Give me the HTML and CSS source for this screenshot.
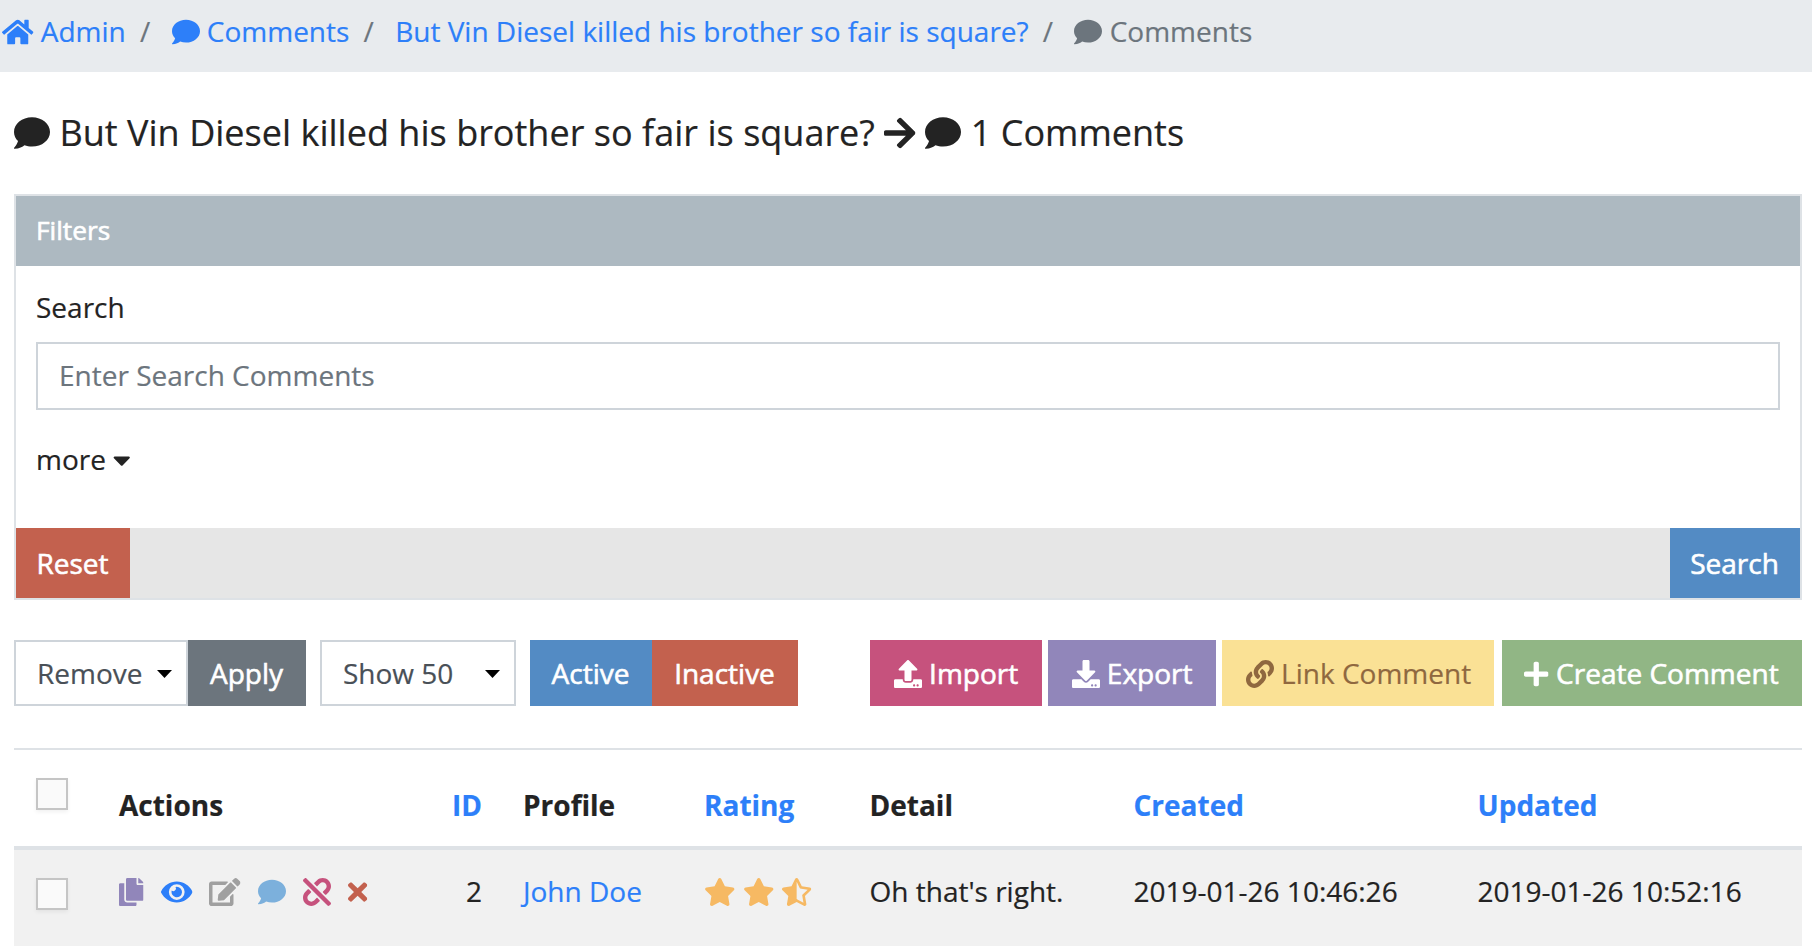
FILE: index.html
```html
<!DOCTYPE html>
<html lang="en">
<head>
<meta charset="utf-8">
<title>Comments</title>
<link rel="stylesheet" href="styles.css">
</head>
<body>
<svg class="sprite" aria-hidden="true">
  <symbol id="comment" viewBox="0 0 512 512"><path d="M256 32C114.6 32 0 125.1 0 240c0 49.6 21.4 95 57 130.7C44.5 421.1 2.7 466 2.2 466.5c-2.2 2.3-2.8 5.7-1.5 8.7S4.8 480 8 480c66.3 0 116-31.8 140.6-51.4 32.7 12.3 69 19.4 107.4 19.4 141.4 0 256-93.1 256-208S397.4 32 256 32z"/></symbol>
  <symbol id="home" viewBox="0 0 576 512"><path d="M280.37 148.26L96 300.11V464a16 16 0 0 0 16 16l112.06-.29a16 16 0 0 0 15.92-16V368a16 16 0 0 1 16-16h64a16 16 0 0 1 16 16v95.64a16 16 0 0 0 16 16.05L464 480a16 16 0 0 0 16-16V300L295.67 148.26a12.19 12.19 0 0 0-15.3 0zM571.6 251.47L488 182.56V44.05a12 12 0 0 0-12-12h-56a12 12 0 0 0-12 12v72.61L318.47 43a48 48 0 0 0-61 0L4.34 251.47a12 12 0 0 0-1.6 16.9l25.5 31A12 12 0 0 0 45.15 301l235.22-193.74a12.19 12.19 0 0 1 15.3 0L530.9 301a12 12 0 0 0 16.9-1.6l25.5-31a12 12 0 0 0-1.7-16.93z"/></symbol>
  <symbol id="arrow" viewBox="0 0 448 512"><path d="M190.5 66.9l22.2-22.2c9.4-9.4 24.6-9.4 33.9 0L441 239c9.4 9.4 9.4 24.6 0 33.9L246.6 467.3c-9.4 9.4-24.6 9.4-33.9 0l-22.2-22.2c-9.5-9.5-9.3-25 .4-34.3L311.4 296H24c-13.3 0-24-10.7-24-24v-32c0-13.3 10.7-24 24-24h287.4L190.9 101.2c-9.8-9.3-10-24.8-.4-34.3z"/></symbol>
  <symbol id="caret" viewBox="0 0 320 512"><path d="M31.3 192h257.3c17.8 0 26.7 21.5 14.1 34.1L174.1 354.8c-7.8 7.8-20.5 7.8-28.3 0L17.2 226.1C4.6 213.5 13.5 192 31.3 192z"/></symbol>
  <symbol id="upload" viewBox="0 0 512 512"><path d="M296 384h-80c-13.3 0-24-10.7-24-24V192h-87.7c-17.8 0-26.7-21.5-14.1-34.1L242.3 5.7c7.5-7.5 19.8-7.5 27.3 0l152.2 152.2c12.6 12.6 3.7 34.1-14.1 34.1H320v168c0 13.3-10.7 24-24 24zm216-8v112c0 13.3-10.7 24-24 24H24c-13.3 0-24-10.7-24-24V376c0-13.3 10.7-24 24-24h136v8c0 30.9 25.1 56 56 56h80c30.9 0 56-25.1 56-56v-8h136c13.3 0 24 10.7 24 24zm-124 88c0-11-9-20-20-20s-20 9-20 20 9 20 20 20 20-9 20-20zm64 0c0-11-9-20-20-20s-20 9-20 20 9 20 20 20 20-9 20-20z"/></symbol>
  <symbol id="download" viewBox="0 0 512 512"><path d="M216 0h80c13.3 0 24 10.7 24 24v168h87.7c17.8 0 26.7 21.5 14.1 34.1L269.7 378.3c-7.5 7.5-19.8 7.5-27.3 0L90.1 226.1c-12.6-12.6-3.7-34.1 14.1-34.1H192V24c0-13.3 10.7-24 24-24zm296 376v112c0 13.3-10.7 24-24 24H24c-13.3 0-24-10.7-24-24V376c0-13.3 10.7-24 24-24h146.7l49 49c20.1 20.1 52.5 20.1 72.6 0l49-49H488c13.3 0 24 10.7 24 24zm-124 88c0-11-9-20-20-20s-20 9-20 20 9 20 20 20 20-9 20-20zm64 0c0-11-9-20-20-20s-20 9-20 20 9 20 20 20 20-9 20-20z"/></symbol>
  <symbol id="link" viewBox="0 0 512 512"><path d="M326.612 185.391c59.747 59.809 58.927 155.698.36 214.59-.11.12-.24.25-.36.37l-67.2 67.2c-59.27 59.27-155.699 59.262-214.96 0-59.27-59.26-59.27-155.7 0-214.96l37.106-37.106c9.84-9.84 26.786-3.3 27.294 10.606.648 17.722 3.826 35.527 9.69 52.721 1.986 5.822.567 12.262-3.783 16.612l-13.087 13.087c-28.026 28.026-28.905 73.66-1.155 101.96 28.024 28.579 74.086 28.749 102.325.51l67.2-67.19c28.191-28.191 28.073-73.757 0-101.83-3.701-3.694-7.429-6.564-10.341-8.569a16.037 16.037 0 0 1-6.947-12.606c-.396-10.567 3.348-21.456 11.698-29.806l21.054-21.055c5.521-5.521 14.182-6.199 20.584-1.731a152.482 152.482 0 0 1 20.522 17.197zM467.547 44.449c-59.261-59.262-155.69-59.27-214.96 0l-67.2 67.2c-.12.12-.25.25-.36.37-58.566 58.892-59.387 154.781.36 214.59a152.454 152.454 0 0 0 20.521 17.196c6.402 4.468 15.064 3.789 20.584-1.731l21.054-21.055c8.35-8.35 12.094-19.239 11.698-29.806a16.037 16.037 0 0 0-6.947-12.606c-2.912-2.005-6.64-4.875-10.341-8.569-28.073-28.073-28.191-73.639 0-101.83l67.2-67.19c28.239-28.239 74.3-28.069 102.325.51 27.75 28.3 26.872 73.934-1.155 101.96l-13.087 13.087c-4.35 4.35-5.769 10.79-3.783 16.612 5.864 17.194 9.042 34.999 9.69 52.721.509 13.906 17.454 20.446 27.294 10.606l37.106-37.106c59.271-59.259 59.271-155.699.001-214.959z"/></symbol>
  <symbol id="plus" viewBox="0 0 448 512"><path d="M416 208H272V64c0-17.67-14.33-32-32-32h-32c-17.67 0-32 14.33-32 32v144H32c-17.67 0-32 14.33-32 32v32c0 17.67 14.33 32 32 32h144v144c0 17.67 14.33 32 32 32h32c17.67 0 32-14.33 32-32V304h144c17.67 0 32-14.33 32-32v-32c0-17.67-14.33-32-32-32z"/></symbol>
  <symbol id="copy" viewBox="0 0 448 512"><path d="M320 448v40c0 13.255-10.745 24-24 24H24c-13.255 0-24-10.745-24-24V120c0-13.255 10.745-24 24-24h72v296c0 30.879 25.121 56 56 56h168zm0-344V0H152c-13.255 0-24 10.745-24 24v368c0 13.255 10.745 24 24 24h272c13.255 0 24-10.745 24-24V128H344c-13.2 0-24-10.8-24-24zm120.971-31.029L375.029 7.029A24 24 0 0 0 358.059 0H352v96h96v-6.059a24 24 0 0 0-7.029-16.97z"/></symbol>
  <symbol id="eye" viewBox="0 0 576 512"><path d="M572.52 241.4C518.29 135.59 410.93 64 288 64S57.68 135.64 3.48 241.41a32.35 32.35 0 0 0 0 29.19C57.71 376.41 165.07 448 288 448s230.32-71.64 284.52-177.41a32.35 32.35 0 0 0 0-29.19zM288 400a144 144 0 1 1 144-144 143.93 143.93 0 0 1-144 144zm0-240a95.31 95.31 0 0 0-25.31 3.79 47.85 47.85 0 0 1-66.9 66.9A95.78 95.78 0 1 0 288 160z"/></symbol>
  <symbol id="edit" viewBox="0 0 576 512"><path d="M402.6 83.2l90.2 90.2c3.8 3.8 3.8 10 0 13.8L274.4 405.6l-92.8 10.3c-12.4 1.4-22.9-9.1-21.5-21.5l10.3-92.8L388.8 83.2c3.8-3.8 10-3.8 13.8 0zm162-22.9l-48.8-48.8c-15.2-15.2-39.9-15.2-55.2 0l-35.4 35.4c-3.8 3.8-3.8 10 0 13.8l90.2 90.2c3.8 3.8 10 3.8 13.8 0l35.4-35.4c15.2-15.3 15.2-40 0-55.2zM384 346.2V448H64V128h229.8c3.2 0 6.2-1.3 8.5-3.5l40-40c7.6-7.6 2.2-20.5-8.5-20.5H48C21.5 64 0 85.5 0 112v352c0 26.5 21.5 48 48 48h352c26.5 0 48-21.5 48-48V306.2c0-10.7-12.9-16-20.5-8.5l-40 40c-2.2 2.3-3.5 5.3-3.5 8.5z"/></symbol>
  <symbol id="unlink" viewBox="0 0 512 512"><path d="M304.083 405.907c4.686 4.686 4.686 12.284 0 16.971l-44.674 44.674c-59.263 59.262-155.693 59.266-214.961 0-59.264-59.265-59.264-155.696 0-214.96l44.675-44.675c4.686-4.686 12.284-4.686 16.971 0l39.598 39.598c4.686 4.686 4.686 12.284 0 16.971l-44.675 44.674c-28.072 28.073-28.072 73.75 0 101.823 28.072 28.072 73.75 28.073 101.824 0l44.674-44.674c4.686-4.686 12.284-4.686 16.971 0l39.597 39.598zm-56.568-260.216c4.686 4.686 12.284 4.686 16.971 0l44.674-44.674c28.072-28.075 73.75-28.073 101.824 0 28.072 28.073 28.072 73.75 0 101.823l-44.675 44.674c-4.686 4.686-4.686 12.284 0 16.971l39.598 39.598c4.686 4.686 12.284 4.686 16.971 0l44.675-44.675c59.263-59.265 59.263-155.695 0-214.96-59.266-59.264-155.695-59.264-214.961 0l-44.674 44.674c-4.686 4.686-4.686 12.284 0 16.971l39.597 39.598zm234.828 359.28l22.627-22.627c9.373-9.373 9.373-24.569 0-33.941L63.598 7.029c-9.373-9.373-24.569-9.373-33.941 0L7.029 29.657c-9.373 9.373-9.373 24.569 0 33.941l441.373 441.373c9.373 9.372 24.569 9.372 33.941 0z"/></symbol>
  <symbol id="times" viewBox="0 0 352 512"><path d="M242.72 256l100.07-100.07c12.28-12.28 12.28-32.19 0-44.48l-22.24-22.24c-12.28-12.28-32.19-12.28-44.48 0L176 189.28 75.93 89.21c-12.28-12.28-32.19-12.28-44.48 0L9.21 111.45c-12.28 12.28-12.28 32.19 0 44.48L109.28 256 9.21 356.07c-12.28 12.28-12.28 32.19 0 44.48l22.24 22.24c12.28 12.28 32.2 12.28 44.48 0L176 322.72l100.07 100.07c12.28 12.28 32.2 12.28 44.48 0l22.24-22.24c12.28-12.28 12.28-32.19 0-44.48L242.72 256z"/></symbol>
  <symbol id="star" viewBox="0 0 576 512"><path d="M259.3 17.8L194 150.2 47.9 171.5c-26.2 3.8-36.7 36.1-17.7 54.6l105.7 103-25 145.5c-4.5 26.3 23.2 46 46.4 33.7L288 439.6l130.7 68.7c23.2 12.2 50.9-7.4 46.4-33.7l-25-145.5 105.7-103c19-18.5 8.5-50.8-17.7-54.6L382 150.2 316.7 17.8c-11.7-23.6-45.6-23.9-57.4 0z"/></symbol>
  <symbol id="star-half" viewBox="0 0 536 512"><path d="M508.55 171.51L362.18 150.2 296.77 17.81C290.89 5.98 279.42 0 267.95 0c-11.4 0-22.79 5.9-28.69 17.81l-65.43 132.38-146.38 21.29c-26.25 3.8-36.77 36.09-17.74 54.59l105.89 103-25.06 145.48C86.98 495.33 103.57 512 122.15 512c4.93 0 10-1.17 14.87-3.75l130.95-68.68 130.94 68.7c4.86 2.55 9.92 3.71 14.83 3.71 18.6 0 35.22-16.61 31.66-37.4l-25.03-145.49 105.91-102.98c19.04-18.5 8.52-50.8-17.73-54.6zm-121.74 123.2l-18.12 17.62 4.28 24.88 19.52 113.45-102.13-53.59-22.38-11.74.03-317.19 51.03 103.29 11.18 22.63 25.01 3.64 114.23 16.63-82.63 80.38z"/></symbol>
</svg>

<nav class="breadcrumb">
  <a class="crumb" href="#"><svg class="icon w18"><use href="#home"/></svg> Admin</a>
  <span class="slash">/</span>
  <a class="crumb" href="#"><svg class="icon"><use href="#comment"/></svg> Comments</a>
  <span class="slash">/</span>
  <a class="crumb" href="#">But Vin Diesel killed his brother so fair is square?</a>
  <span class="slash">/</span>
  <span class="crumb current"><svg class="icon"><use href="#comment"/></svg> Comments</span>
</nav>

<main class="content">
  <h1 class="title"><svg class="icon"><use href="#comment"/></svg> But Vin Diesel killed his brother so fair is square? <svg class="icon w14"><use href="#arrow"/></svg> <svg class="icon"><use href="#comment"/></svg> 1 Comments</h1>

  <section class="card">
    <header class="card-header">Filters</header>
    <div class="card-body">
      <label class="label" for="q">Search</label>
      <input class="input" id="q" type="text" placeholder="Enter Search Comments">
      <div class="more">more <svg class="icon w10"><use href="#caret"/></svg></div>
    </div>
    <footer class="card-footer">
      <button class="btn red reset">Reset</button>
      <button class="btn blue find">Search</button>
    </footer>
  </section>

  <div class="toolbar">
    <div class="select remove"><span>Remove</span><i class="tri"></i></div>
    <button class="btn gray apply">Apply</button>
    <div class="select show"><span>Show 50</span><i class="tri"></i></div>
    <button class="btn blue active">Active</button>
    <button class="btn red inactive">Inactive</button>
    <div class="tools">
      <button class="btn pink import"><svg class="icon"><use href="#upload"/></svg> Import</button>
      <button class="btn purple export"><svg class="icon"><use href="#download"/></svg> Export</button>
      <button class="btn yellow linkc"><svg class="icon"><use href="#link"/></svg> Link Comment</button>
      <button class="btn green create"><svg class="icon w14"><use href="#plus"/></svg> Create Comment</button>
    </div>
  </div>

  <div class="table">
    <div class="row head">
      <span class="check"></span>
      <span>Actions</span>
      <a class="num" href="#">ID</a>
      <span>Profile</span>
      <a href="#">Rating</a>
      <span>Detail</span>
      <a href="#">Created</a>
      <a href="#">Updated</a>
    </div>
    <div class="row item">
      <span class="check"></span>
      <span class="actions">
        <svg class="icon w14 c-purple"><use href="#copy"/></svg>
        <svg class="icon w18 c-blue"><use href="#eye"/></svg>
        <svg class="icon w18 c-gray"><use href="#edit"/></svg>
        <svg class="icon c-sky"><use href="#comment"/></svg>
        <svg class="icon c-pink"><use href="#unlink"/></svg>
        <svg class="icon w11 c-red"><use href="#times"/></svg>
      </span>
      <span class="num">2</span>
      <a href="#">John Doe</a>
      <span class="stars"><svg class="icon w18"><use href="#star"/></svg> <svg class="icon w18"><use href="#star"/></svg> <svg class="icon whalf"><use href="#star-half"/></svg></span>
      <span>Oh that's right.</span>
      <span>2019-01-26 10:46:26</span>
      <span>2019-01-26 10:52:16</span>
    </div>
  </div>
</main>
</body>
</html>
```
FILE: styles.css
```css
* { box-sizing: border-box; }

body {
  margin: 0;
  background: #fff;
  color: #232323;
  font: 28px/42px "Open Sans", "Noto Sans", sans-serif;
  -webkit-text-stroke: 0.2px currentColor;
}

a { color: #2d7ff9; text-decoration: none; }

.sprite { display: none; }

.icon {
  width: 1em;
  height: 1em;
  fill: currentColor;
  vertical-align: -0.125em;
  overflow: visible;
}
.w18 { width: 1.125em; }
.w14 { width: 0.875em; }
.w11 { width: 0.6875em; }
.w10 { width: 0.625em; }
.whalf { width: 1.047em; }

.breadcrumb {
  display: flex;
  height: 72px;
  padding: 10px 0 0 2px;
  background: #e8ebee;
  white-space: nowrap;
}
.slash { margin: 0 21.3px 0 14.2px; color: #6c757d; }
.current { color: #6c757d; }

.content { padding: 0 10px 0 14px; }

.title {
  height: 122px;
  margin: 0;
  padding-top: 34px;
  font-size: 36px;
  font-weight: 400;
  line-height: 54px;
  word-spacing: 0.1px;
}

.card { height: 406px; border: 2px solid #dee2e6; }
.card-header {
  height: 70px;
  padding: 13px 20px;
  background: #adb9c1;
  color: #fff;
  font-size: 26.25px;
  -webkit-text-stroke-width: 0.6px;
}
.card-body { height: 262px; padding: 20px; }
.label { display: block; height: 56px; }
.input {
  display: block;
  width: 100%;
  height: 68px;
  padding: 0 21px 2px;
  border: 2px solid #ced4da;
  background: #fff;
  font: inherit;
}
.input::placeholder { color: #6c757d; opacity: 1; }
.more { margin-top: 28px; }
.card-footer {
  display: flex;
  justify-content: space-between;
  height: 70px;
  background: #e6e6e6;
}

.btn {
  height: 66px;
  padding: 0 1px 0 0;
  border: 0;
  color: #fff;
  font: inherit;
  white-space: nowrap;
  -webkit-text-stroke-width: 0.6px;
}
.card-footer .btn { height: 70px; }
.red { background: #c3614e; }
.blue { background: #538bc4; }
.gray { background: #6c757d; }
.pink { background: #c6527d; }
.purple { background: #9186ba; }
.btn.yellow { padding: 0 0 0 1px; background: #fae195; color: #8f683f; -webkit-text-stroke-width: 0.2px; }
.green { background: #91b685; }
.reset { width: 114px; }
.find { width: 130px; }
.apply { width: 118px; margin-right: 14px; }
.active { width: 122px; }
.inactive { width: 146px; }
.import, .export { padding: 0; }

.toolbar { display: flex; height: 66px; margin-top: 40px; }
.select {
  display: flex;
  align-items: center;
  justify-content: space-between;
  height: 66px;
  padding: 0 14px 0 21px;
  border: 2px solid #ced4da;
  color: #495057;
}
.remove { width: 174px; }
.show { width: 196px; margin-right: 14px; }
.tri {
  width: 15px;
  height: 8px;
  margin-top: 2px;
  background: #000;
  clip-path: polygon(0 0, 100% 0, 50% 100%);
}
.tools { display: flex; margin-left: auto; }
.import { width: 172px; margin-right: 6px; }
.export { width: 168px; margin-right: 6px; }
.linkc { width: 272px; margin-right: 8px; }
.create { width: 300px; }

.table { margin-top: 42px; border-top: 2px solid #dee2e6; }
.row {
  display: grid;
  grid-template-columns: 83px 250px 154px 181px 165.5px 264px 344px 1fr;
  padding-left: 22px;
  white-space: nowrap;
}
.head { height: 100px; padding-top: 34px; border-bottom: 4px solid #dee2e6; font-weight: 700; }
.item { height: 96px; padding-top: 20px; background: #f1f1f1; }
.num { padding-right: 41px; text-align: right; }
.check {
  width: 32px;
  height: 32px;
  border: 2px solid #c5c5c5;
  background: #fafafa;
  box-shadow: 0 2px 4px rgba(0, 0, 0, 0.06);
}
.head .check { margin-top: -6px; }
.item .check { margin-top: 8px; }
.actions { display: flex; gap: 17.2px; padding-top: 8px; }
.stars { color: #f6b963; }
.c-purple { color: #9186ba; }
.c-blue { color: #2d7ff9; }
.c-gray { color: #a0a0a0; }
.c-sky { color: #7cb0dc; }
.c-pink { color: #c6527d; }
.c-red { color: #c3614e; }
```
